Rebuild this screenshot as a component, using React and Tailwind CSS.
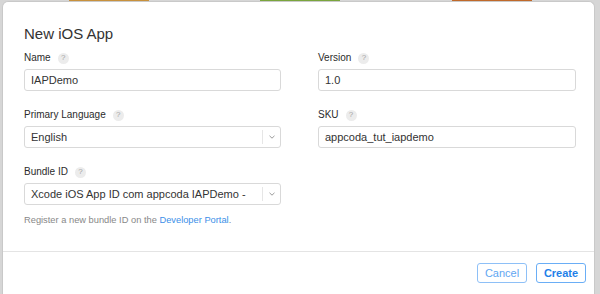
function Help() {
  return (
    <span className="ml-[7px] inline-flex h-[11px] w-[11px] items-center justify-center rounded-full bg-[#ececec] text-[8px] leading-none text-[#a5a5a5]">
      ?
    </span>
  );
}

function Label({ children }) {
  return (
    <div className="mb-[5px] flex h-[12px] items-center text-[10px] leading-[12px] text-[#2b2b2b]">
      {children}
      <Help />
    </div>
  );
}

function TextInput({ value }) {
  return (
    <div className="flex h-[22px] items-center rounded-[3px] border border-[#d9d9d9] bg-white px-[6px] text-[11px] text-[#333]">
      {value}
    </div>
  );
}

function Select({ value }) {
  return (
    <div className="flex h-[22px] items-center rounded-[3px] border border-[#d9d9d9] bg-white text-[11px] text-[#333]">
      <span className="flex-1 truncate pl-[6px]">{value}</span>
      <span className="h-[14px] w-px bg-[#e6e6e6]" />
      <span className="flex w-[17px] items-center justify-center">
        <svg width="6" height="4" viewBox="0 0 6 4" fill="none">
          <path d="M0.5 0.8 L3 3.2 L5.5 0.8" stroke="#9a9a9a" strokeWidth="1" />
        </svg>
      </span>
    </div>
  );
}

export default function App() {
  return (
    <div
      className="flex h-[294px] w-[600px] flex-col overflow-hidden bg-[#d6d6d6]"
      style={{ fontFamily: '"Liberation Sans", Arial, sans-serif' }}
    >
      {/* strip behind the sheet */}
      <div className="flex h-px shrink-0">
        <div className="ml-[69px] w-[80px] bg-[#c8913c]" />
        <div className="ml-[111px] w-[80px] bg-[#7aa53c]" />
        <div className="ml-[112px] w-[80px] bg-[#c0692a]" />
      </div>

      {/* Sheet */}
      <div className="ml-[2px] flex w-[593px] flex-1 flex-col rounded-t-[6px] border border-b-0 border-[#c9c9c9] bg-white">
        <div className="pl-[21px] pr-[17px] pt-[23px] pb-[25px]">
          <h1 className="text-[15px] leading-[17px] text-[#333]">New iOS App</h1>

          <div className="mt-[10px] grid grid-cols-[257px_258px] gap-x-[37px] gap-y-[18px]">
            <div>
              <Label>Name</Label>
              <TextInput value="IAPDemo" />
            </div>
            <div>
              <Label>Version</Label>
              <TextInput value="1.0" />
            </div>
            <div>
              <Label>Primary Language</Label>
              <Select value="English" />
            </div>
            <div>
              <Label>SKU</Label>
              <TextInput value="appcoda_tut_iapdemo" />
            </div>
            <div>
              <Label>Bundle ID</Label>
              <Select value="Xcode iOS App ID com appcoda IAPDemo -" />
            </div>
          </div>

          <p className="mt-[10px] text-[9.3px] leading-[11px] text-[#888]">
            Register a new bundle ID on the{" "}
            <span className="text-[#3b8fe8]">Developer Portal</span>.
          </p>
        </div>

        {/* Footer */}
        <div className="flex justify-end gap-[9px] border-t border-[#e4e4e4] pr-[8px] pt-[11px]">
          <button className="h-[20px] w-[50px] rounded-[3px] border border-[#8ec0f7] text-[11px] text-[#5fa6f2]">
            Cancel
          </button>
          <button className="h-[20px] w-[50px] rounded-[3px] border border-[#6aaef6] text-[11px] font-bold text-[#1f7fe8]">
            Create
          </button>
        </div>
      </div>
    </div>
  );
}
